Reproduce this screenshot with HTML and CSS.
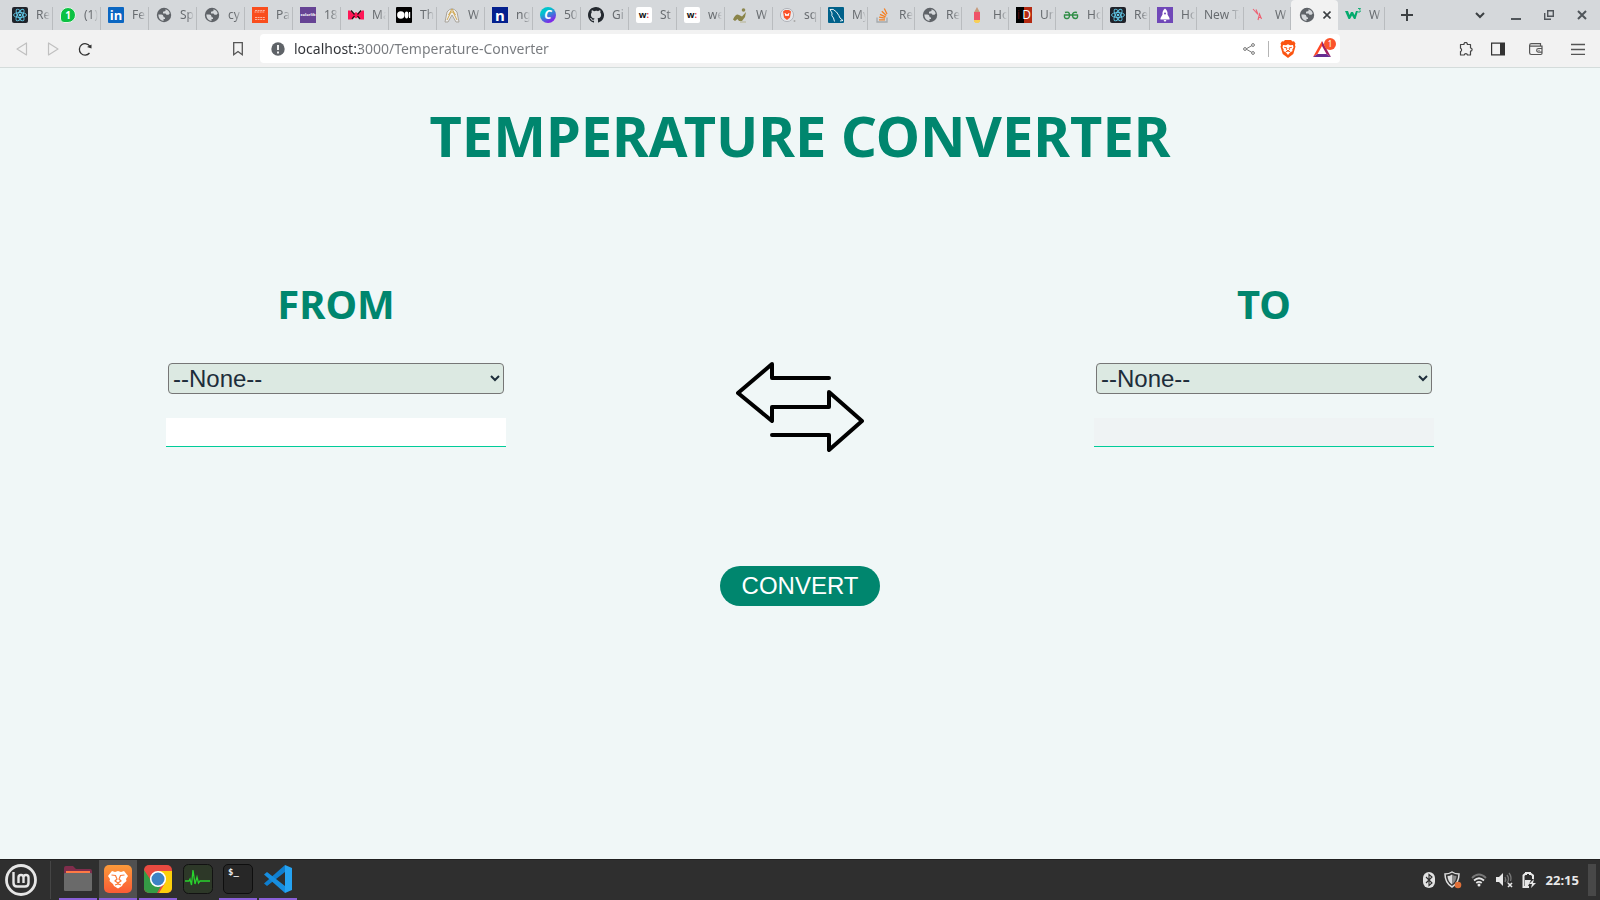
FILE: index.html
```html
<!DOCTYPE html>
<html lang="en">
<head>
<meta charset="utf-8">
<title>Temperature Converter</title>
<link rel="stylesheet" href="styles.css">
</head>
<body>
<svg class="defs" aria-hidden="true">
  <symbol id="globe" viewBox="0 0 16 16"><circle cx="8" cy="8" r="7.200" fill="#5f6368"/><path d="M2.300 7.500h3q2 0 2 1.500t1.700 1.500v1.500H7.500v2Q2.500 13 2.300 7.500zM9.500 2.200q3.500 1 4.200 4.300l-1.200 1.200h-2L9.500 6.500H7V4.800l2.500-.800z" fill="#d5d8db"/></symbol>
  <symbol id="react" viewBox="0 0 16 16"><rect width="16" height="16" rx="2" fill="#20232a"/><g fill="none" stroke="#61c9e8" stroke-width=".9"><ellipse cx="8" cy="8" rx="6.500" ry="2.500"/><ellipse cx="8" cy="8" rx="6.500" ry="2.500" transform="rotate(60 8 8)"/><ellipse cx="8" cy="8" rx="6.500" ry="2.500" transform="rotate(120 8 8)"/></g><circle cx="8" cy="8" r="1.300" fill="#61c9e8"/></symbol>
  <symbol id="lion" viewBox="0 0 16 18"><path d="M3.500 1.500 5 0h6l1.500 1.500L14 1.300l1.500 2.200-.6 1.500.6 1.500-2.200 7.500L8 18l-5.300-4L.5 6.500 1.100 5 .5 3.500 2 1.300z" fill="#fb5411"/><path d="m3 5 3 .2L8 4.200l2 1L13 5l.5 2.500-1.300 2.200.4 1.300-2.600 1.600L8 15l-2-2.400L3.400 11l.4-1.300L2.500 7.500z" fill="#fff"/><path d="M4.200 7.300 7 8l-.6 1.500L8 11l1.600-1.500L9 8l2.800-.7M5.800 11.700 8 11l2.200.7" fill="none" stroke="#fb5411" stroke-width="1"/></symbol>
</svg>

<header class="browser">
  <div class="tabstrip">
    <nav class="tabs" aria-label="Open tabs">
      <button class="tab"><svg class="fav"><use href="#react"/></svg><span class="tab-label">Re</span></button>
      <button class="tab"><span class="fav fav-whatsapp">1</span><span class="tab-label">(1)</span></button>
      <button class="tab"><span class="fav fav-linkedin">in</span><span class="tab-label">Fe</span></button>
      <button class="tab"><svg class="fav"><use href="#globe"/></svg><span class="tab-label">Sp</span></button>
      <button class="tab"><svg class="fav"><use href="#globe"/></svg><span class="tab-label">cy</span></button>
      <button class="tab"><svg class="fav" viewBox="0 0 16 16"><path fill="#f94d1c" d="M0 0h16v16H0z"/><path d="M3 3.500h10M2.500 5h10M3 10.500h10M3 12.500h10" stroke="#fbb39c" stroke-width="1" stroke-dasharray="2 .6"/></svg><span class="tab-label">Pa</span></button>
      <button class="tab"><span class="fav fav-colorlib">colorlib</span><span class="tab-label">18</span></button>
      <button class="tab"><svg class="fav" viewBox="0 0 16 16"><path d="M0 3.500h2L5.500 7 8 5l2.500 2L14 3.500h2v9h-3.500L10 10l-2 1.500L6 10l-2.500 2.500H0z" fill="#ff1656"/><path d="M3 3.500 6.500 7.500M13 3.500 9.500 7.500M4 12l2.500-3M12 12 9.500 9" stroke="#211" stroke-width="1.300"/></svg><span class="tab-label">Ma</span></button>
      <button class="tab"><svg class="fav" viewBox="0 0 16 16"><rect width="16" height="16" rx="1"/><circle cx="4.800" cy="8" r="3.700" fill="#fff"/><ellipse cx="10.600" cy="8" rx="1.900" ry="3.400" fill="#fff"/><path d="M13.600 5v6" stroke="#fff" stroke-width="1.200"/></svg><span class="tab-label">Th</span></button>
      <button class="tab"><svg class="fav" viewBox="0 0 16 16"><path d="M1 15h3l4-7 4 7h3L13 5Q8-1.500 3 5z" fill="#eee" stroke="#a9a49b"/><path d="m3 13 4-8h2l4 8M4.500 8 8 2l3.500 6" fill="none" stroke="#d0a64e"/></svg><span class="tab-label">W</span></button>
      <button class="tab"><span class="fav fav-nginx">n</span><span class="tab-label">ng</span></button>
      <button class="tab"><span class="fav fav-canva">C</span><span class="tab-label">50</span></button>
      <button class="tab"><svg class="fav" viewBox="0 0 16 16"><path fill="#24292f" d="M8 0C3.580 0 0 3.580 0 8c0 3.540 2.290 6.530 5.470 7.590.4.070.55-.17.55-.38v-1.490c-2.010.37-2.530-.49-2.690-.94-.09-.23-.48-.94-.82-1.130-.28-.15-.68-.52-.01-.53.63-.01 1.080.58 1.230.82.72 1.210 1.870.87 2.330.66.07-.52.28-.87.510-1.070-1.780-.2-3.640-.89-3.640-3.950 0-.87.31-1.590.82-2.150-.08-.2-.36-1.020.08-2.120 0 0 .67-.21 2.200.82A7.600 7.600 0 0 1 8 3.860c.68 0 1.360.09 2 .27 1.530-1.040 2.200-.82 2.200-.82.44 1.100.16 1.920.08 2.120.51.56.82 1.270.82 2.150 0 3.070-1.870 3.750-3.650 3.950.29.25.54.73.54 1.480v2.200c0 .21.15.46.55.38A8 8 0 0 0 8 0z"/></svg><span class="tab-label">Gi</span></button>
      <button class="tab"><span class="fav fav-w">w<i>:</i></span><span class="tab-label">St</span></button>
      <button class="tab"><span class="fav fav-w">w<i>:</i></span><span class="tab-label">we</span></button>
      <button class="tab"><svg class="fav" viewBox="0 0 16 16"><circle cx="11.500" cy="3" r="1.800" fill="#8d884f"/><path d="M1 12.500Q4 6 7 8l3 1.500L14 5l-1 5-3 4H7l-1.500-2L3 14z" fill="#8a8449"/><path d="M8 15h6" stroke="#b7b492"/></svg><span class="tab-label">W</span></button>
      <button class="tab"><svg class="fav" viewBox="0 0 16 16"><circle cx="7" cy="8" r="6.600" fill="#e6e8eb" stroke="#b2b5bb"/><circle cx="14.500" cy="14" r="1" fill="#aaa"/><path d="M3 4.500 5 3h4l2 1.500-1 6L7 13l-3-2.500z" fill="#fb542b"/><path d="m5 6 1 3 1-2 1 2 1-3" stroke="#fff" fill="none"/></svg><span class="tab-label">sq</span></button>
      <button class="tab narrow"><svg class="fav" viewBox="0 0 16 16"><rect width="16" height="16" rx="1" fill="#00618a"/><path d="M2 2.500Q5 1 8.500 5q3 4 3.500 6l3 2.500-3 .5M2 2.500 4 6q-1 3 1.500 5l1 3.500" stroke="#fff" stroke-width=".9" fill="none"/></svg><span class="tab-label">My</span></button>
      <button class="tab narrow"><svg class="fav" viewBox="0 0 16 16"><path d="M2 10.500v4.500h10v-4.500" fill="none" stroke="#a5a9ad" stroke-width="1.300"/><path d="M4 12.800h6M4.100 10.200l6 1M5 7.300l5.600 2.600M6.800 4.300l4.500 4.200M9.300 1.500l2.700 5.500" stroke="#f48024" stroke-width="1.300"/></svg><span class="tab-label">Re</span></button>
      <button class="tab narrow"><svg class="fav"><use href="#globe"/></svg><span class="tab-label">Re</span></button>
      <button class="tab narrow"><svg class="fav" viewBox="0 0 16 16"><path d="M5 5.500 8 0l3 5.500z" fill="#c79a7a"/><path d="M5 5h6v8H5z" fill="#ef5366"/><path d="M5 13h6v1.500L9.500 16h-3L5 14.500z" fill="#f8cf58"/></svg><span class="tab-label">Ho</span></button>
      <button class="tab narrow"><span class="fav fav-id"><i>i</i><b>D</b></span><span class="tab-label">Un</span></button>
      <button class="tab narrow"><svg class="fav" viewBox="0 0 16 16"><path d="M2 5.500Q6.500 4 6.500 8t-3 3.500Q1 11.500 1.500 8h13q.500 3.500-2 3.500-3 0-3-3.500T14 5.500" fill="none" stroke="#2f8d46" stroke-width="1.400"/></svg><span class="tab-label">Ho</span></button>
      <button class="tab narrow"><svg class="fav"><use href="#react"/></svg><span class="tab-label">Re</span></button>
      <button class="tab narrow"><svg class="fav" viewBox="0 0 16 16"><path fill="#7048b8" d="M0 0h16v16H0z"/><path d="M8 1.500q3 2.500 2.500 6L12.500 11v1.500H3.500V11l2-3.500Q5 4 8 1.500M6.500 13h3L8 15z" fill="#fff"/><circle cx="8" cy="6.500" r="1" fill="#7048b8"/></svg><span class="tab-label">Ho</span></button>
      <button class="tab narrow"><span class="tab-label wide">New Tab</span></button>
      <button class="tab narrow"><svg class="fav" viewBox="0 0 16 16"><path d="m2 2 5 5.500M5 2.500l2 5M7 13l1.500-6 2 5M7.500 10.500h2.500" fill="none" stroke="#ee5f71" stroke-width="1.100"/></svg><span class="tab-label">W</span></button>
      <button class="tab narrow active" aria-label="Temperature Converter"><svg class="fav"><use href="#globe"/></svg><svg class="tab-close" viewBox="0 0 8 8"><path d="m.5.5 7 7m0-7-7 7" stroke="#3c4043" stroke-width="1.600"/></svg></button>
      <button class="tab narrow"><svg class="fav" viewBox="0 0 16 16"><path d="M0 4h3l1.500 4L6 5h2l1.500 3L11 4h2l-2.500 8H9L7 8.500 5 12H3.500z" fill="#04aa6d"/><path d="M13 1.500h2.500l-1 1.500q1.500.500.500 2h-2" fill="none" stroke="#04aa6d" stroke-width=".9"/></svg><span class="tab-label">W</span></button>
    </nav>
    <button class="icon-btn new-tab" aria-label="New tab"><svg width="12" height="12" viewBox="0 0 12 12"><path d="M6 0v12M0 6h12" stroke="#3c4043" stroke-width="2"/></svg></button>
    <div class="window-controls">
      <button class="icon-btn" aria-label="Search tabs"><svg width="10" height="8" viewBox="0 0 10 8"><path d="m1 2 4 4 4-4" fill="none" stroke="#3c4043" stroke-width="2"/></svg></button>
      <button class="icon-btn" aria-label="Minimize"><svg width="10" height="10" viewBox="0 0 10 10"><path d="M0 9h10" stroke="#50555a" stroke-width="2"/></svg></button>
      <button class="icon-btn" aria-label="Restore"><svg width="10" height="10" viewBox="0 0 10 10"><path d="M3.700.700h5.600v5.600H3.700zM.700 3v6.300H7" fill="none" stroke="#50555a" stroke-width="1.400"/></svg></button>
      <button class="icon-btn" aria-label="Close"><svg width="10" height="10" viewBox="0 0 10 10"><path d="m1 1 8 8m0-8L1 9" stroke="#50555a" stroke-width="2"/></svg></button>
    </div>
  </div>

  <div class="toolbar">
    <div class="nav-buttons">
      <button class="icon-btn" aria-label="Back"><svg width="12" height="14" viewBox="0 0 12 14"><path d="M10.500 1v12L1 7z" fill="none" stroke="#c0c0c0" stroke-width="1.200" stroke-linejoin="round"/></svg></button>
      <button class="icon-btn" aria-label="Forward"><svg width="12" height="14" viewBox="0 0 12 14"><path d="M1.500 1v12L11 7z" fill="none" stroke="#c0c0c0" stroke-width="1.200" stroke-linejoin="round"/></svg></button>
      <button class="icon-btn" aria-label="Reload"><svg width="14" height="14" viewBox="0 0 14 14"><path d="M12 4.500A5.700 5.700 0 1 0 11.500 11" fill="none" stroke="#333" stroke-width="1.300"/><path d="m9 5 4.500-2.500v4z" fill="#333"/></svg></button>
    </div>
    <button class="icon-btn bookmark" aria-label="Bookmark this tab"><svg width="10" height="14" viewBox="0 0 10 14"><path d="M.700.700h8.600v12L5 9.500.700 12.700z" fill="none" stroke="#555" stroke-width="1.300"/></svg></button>
    <div class="address">
      <svg width="14" height="14" viewBox="0 0 14 14"><circle cx="7" cy="7" r="6.700" fill="#5f6368"/><path d="M7 3v5M7 9.500v2" stroke="#fff" stroke-width="1.800"/></svg>
      <input class="url" type="text" aria-label="Address" value="localhost:3000/Temperature-Converter">
      <button class="icon-btn" aria-label="Share"><svg width="12" height="12" viewBox="0 0 12 12"><path d="M3 6l6-3.500M3 6l6 3.500" stroke="#777"/><g fill="#fff" stroke="#777"><circle cx="2" cy="6" r="1.400"/><circle cx="10" cy="2" r="1.400"/><circle cx="10" cy="10" r="1.400"/></g></svg></button>
      <span class="address-rule"></span>
      <button class="icon-btn" aria-label="Brave Shields"><svg width="16" height="18"><use href="#lion"/></svg></button>
      <button class="icon-btn rewards" aria-label="Brave Rewards"><svg width="18" height="16" viewBox="0 0 18 16"><path d="M9 0 0 16l4.500-3L9 5z" fill="#ff4724"/><path d="m9 0 9 16-4.500-3L9 5z" fill="#9e1f63"/><path d="M0 16h18l-4.500-3h-9z" fill="#662d91"/></svg><span class="badge">1</span></button>
    </div>
    <div class="tools">
      <button class="icon-btn" aria-label="Extensions"><svg width="14" height="14" viewBox="0 0 14 14"><path d="M1.500 2.500H5a1.700 1.700 0 1 1 3.300 0H11.500V6a1.600 1.600 0 1 1 0 3.200v3.800H8.500a1.700 1.700 0 0 0-3.300 0H1.500V9.500a1.700 1.700 0 0 0 0-3.200z" fill="none" stroke="#444" stroke-width="1.200" stroke-linejoin="round"/></svg></button>
      <button class="icon-btn" aria-label="Sidebar"><svg width="14" height="14" viewBox="0 0 14 14"><path d="M.600 1.100h12.800v11.800H.600z" fill="none" stroke="#333" stroke-width="1.200"/><path d="M9 1h4.500v12H9z" fill="#333"/></svg></button>
      <button class="icon-btn" aria-label="Wallet"><svg width="14" height="14" viewBox="0 0 14 14"><path d="M11.500 4V1.700h-9Q.600 1.700.600 3.500v7.300q0 1.700 1.700 1.700h9.500q1.200 0 1.200-1.200V4.200H2Q.6 4.200.6 3M13 6.500H9.500a1.800 1.800 0 0 0 0 3.600H13M9.500 8.300h1" fill="none" stroke="#555" stroke-width="1.200"/></svg></button>
      <button class="icon-btn" aria-label="Menu"><svg width="14" height="12" viewBox="0 0 14 12"><path d="M0 1.500h14M0 6.500h14M0 11.300h14" stroke="#555" stroke-width="1.300"/></svg></button>
    </div>
  </div>
</header>

<main class="page">
  <h1 class="title">TEMPERATURE CONVERTER</h1>
  <form class="converter">
    <section class="side">
      <h2 class="side-title">FROM</h2>
      <select class="unit" aria-label="From unit"><option>--None--</option><option>Celsius</option><option>Fahrenheit</option><option>Kelvin</option></select>
      <input class="value" type="text" aria-label="From value">
    </section>
    <svg class="arrows" viewBox="0 0 128 90"><path d="M93 16H36V2L2 31l34 28V45h57V30l33 29-33 29V73H36" fill="none" stroke="#000" stroke-width="4" stroke-linecap="round" stroke-linejoin="round"/></svg>
    <section class="side">
      <h2 class="side-title">TO</h2>
      <select class="unit" aria-label="To unit"><option>--None--</option><option>Celsius</option><option>Fahrenheit</option><option>Kelvin</option></select>
      <input class="value" type="text" aria-label="To value" disabled>
    </section>
    <button class="convert" type="button">CONVERT</button>
  </form>
</main>

<footer class="taskbar">
  <button class="icon-btn start" aria-label="Start menu"><svg width="32" height="32" viewBox="0 0 32 32"><circle cx="16" cy="16" r="14.500" fill="none" stroke="#e6e6e6" stroke-width="2.800"/><path d="M8.500 8v11q0 3.500 3.500 3.500h8q3.500 0 3.500-3.500v-5.500q0-2.500-2.500-2.500t-2.500 2.500V19M18.500 13.500q0-2.500-2.500-2.500t-2.500 2.500V19" fill="none" stroke="#e6e6e6" stroke-width="2.400"/></svg></button>
  <span class="task-rule"></span>
  <div class="apps">
    <button class="app running" aria-label="Files"><svg width="28" height="28" viewBox="0 0 28 28"><path d="M0 10V3q0-2 2-2h7l3 3h14q2 0 2 2v4z" fill="#802d4c"/><path d="M2 6h24v6H2z" fill="#ff7a45"/><rect y="8" width="28" height="18" rx="1" fill="#6a6a6a"/></svg></button>
    <button class="app running focused" aria-label="Brave"><svg width="28" height="28" viewBox="0 0 28 28"><defs><linearGradient id="bg" x2="0" y2="1"><stop stop-color="#fb9a3a"/><stop offset="1" stop-color="#fb5b35"/></linearGradient></defs><rect width="28" height="28" rx="5" fill="url(#bg)"/><path d="m8 6 3 1 3-1 3 1 3-1 4 5-2 3 .5 2-3.500 3-1 2-4 2.500L10 21l-1-2-3.500-3 .5-2-2-3z" fill="#fff"/><path d="m7.500 10 4 .500L13 14l-2 2 3 2 3-2-2-2 1.500-3.500 4-.500M11 20l3-1 3 1" fill="none" stroke="#fb7a38" stroke-width="1.200"/></svg></button>
    <button class="app running" aria-label="Chrome"><svg width="28" height="28" viewBox="0 0 28 28"><defs><clipPath id="cr"><rect width="28" height="28" rx="5"/></clipPath></defs><g clip-path="url(#cr)"><path d="M0 0h28v28H0z" fill="#e84a40"/><path d="M0 5l8 12 9 4-4 7H0z" fill="#359b45"/><path d="M14 6h14v22H15l6-10z" fill="#fccf0b"/></g><circle cx="14" cy="14" r="7.300" fill="#3d82c4" stroke="#fff" stroke-width="1.600"/></svg></button>
    <button class="app" aria-label="System Monitor"><svg width="30" height="30" viewBox="0 0 30 30"><rect x=".5" y=".5" width="29" height="29" rx="5" fill="#2d3828" stroke="#121212"/><path d="M2 17h4l1-2 1.500 6L10 6l2 14 2-7 1.500 6 1.500-2h10" fill="none" stroke="#28d42d" stroke-width="1.300"/></svg></button>
    <button class="app running" aria-label="Terminal"><span class="terminal">$_</span></button>
    <button class="app running" aria-label="Visual Studio Code"><svg width="28" height="28" viewBox="0 0 28 28"><path d="M21 0 28 3v22l-7 3z" fill="#25a3f2"/><path d="M21 0v7L3 21l-3-2.500z" fill="#0f7fd0"/><path d="M21 28v-7L3 7 0 9.500z" fill="#178ee0"/></svg></button>
  </div>
  <div class="tray">
    <svg width="12" height="16" viewBox="0 0 12 16"><rect width="12" height="16" rx="6" fill="#e2e2e2"/><path d="m3 5 6 6-3 2.500v-11L9 5l-6 6" fill="none" stroke="#2f2f2f" stroke-width="1.100"/></svg>
    <svg width="18" height="18" viewBox="0 0 18 18"><path d="M8 1q3 2 7 2 0 9-7 13Q1 12 1 3q4 0 7-2z" fill="#333" stroke="#ddd" stroke-width="1.500"/><path d="M8 3.500v10Q3.500 10 3.500 5 6 5 8 3.500z" fill="#ddd"/><path d="M8 3.500v10q4.500-3.500 4.500-8.500Q10 5 8 3.500z" fill="#888"/><circle cx="14" cy="14" r="3.300" fill="#e07038"/></svg>
    <svg width="16" height="14" viewBox="0 0 16 14"><path d="M1 5Q8-2 15 5" fill="none" stroke="#777" stroke-width="1.800"/><path d="M3 7.500q5-4.500 10 0M5.300 10q2.700-2.300 5.400 0" fill="none" stroke="#e8e8e8" stroke-width="1.800"/><circle cx="8" cy="12" r="1.500" fill="#e8e8e8"/></svg>
    <svg width="17" height="16" viewBox="0 0 17 16"><path d="M0 5h3l4-4v13l-4-4H0z" fill="#e8e8e8"/><path d="M9 5q1.500 2.500 0 5M11 3q3 4 0 8M13 1q3 4 1.500 8" fill="none" stroke="#777" stroke-width="1.300"/><path d="m12 11 4 4m0-4-4 4" stroke="#e8e8e8" stroke-width="1.600"/></svg>
    <svg width="15" height="16" viewBox="0 0 15 16"><path d="M7 15H1.500V3.500L3 2h1V1h4v1h1l2 1.500V7" fill="none" stroke="#e8e8e8" stroke-width="2"/><path d="M3 8h6l-3 6H3zM12 7l-5 5h3l-1 4 5-5h-3z" fill="#e8e8e8"/></svg>
    <time class="clock">22:15</time>
    <button class="show-desktop" aria-label="Show desktop"></button>
  </div>
</footer>
</body>
</html>
```

FILE: styles.css
```css
* { box-sizing: border-box; }

body {
  margin: 0;
  min-height: 100vh;
  display: flex;
  flex-direction: column;
  background: #f0f7f7;
  font-family: "Noto Sans", "Open Sans", sans-serif;
}

button {
  margin: 0;
  padding: 0;
  border: 0;
  background: none;
  font: inherit;
  color: inherit;
}

svg { display: block; flex: none; }

.defs { position: absolute; width: 0; height: 0; }

.icon-btn {
  display: flex;
  align-items: center;
  justify-content: center;
}

/* Tab strip */
.tabstrip {
  display: flex;
  align-items: stretch;
  height: 30px;
  padding-left: 5px;
  background: #d5d8db;
}

.tabs { display: flex; }

.tab {
  display: flex;
  align-items: center;
  gap: 8px;
  width: 48px;
  padding-left: 7px;
  background: linear-gradient(#b9bcbf, #b9bcbf) right bottom / 1px 23px no-repeat;
  overflow: hidden;
}

.tab.narrow { width: 47px; }

.tab.active {
  gap: 8px;
  padding-left: 8px;
  background: #f2f2f2;
  border-radius: 4px 4px 0 0;
}

.tab-close { width: 8px; height: 8px; }

.tab-label {
  width: 14px;
  overflow: hidden;
  white-space: nowrap;
  text-align: left;
  font-size: 12px;
  line-height: 18px;
  color: #686c70;
  mask-image: linear-gradient(90deg, #000 50%, transparent);
}

.tab-label.wide {
  width: 36px;
  mask-image: linear-gradient(90deg, #000 65%, transparent);
}

.fav {
  flex: none;
  display: flex;
  align-items: center;
  justify-content: center;
  width: 16px;
  height: 16px;
  font: bold 12px/16px "Open Sans", sans-serif;
  color: #fff;
}

.fav i { font-style: normal; }
.fav-whatsapp { border-radius: 8px 8px 8px 4px; background: #0cc143; border: 1px solid #e8f5ea; font-size: 10px; }
.fav-linkedin { border-radius: 1px; background: #0a66c2; font-size: 13px; }
.fav-colorlib { background: #664394; font-size: 4px; }
.fav-nginx { background: #04208e; font-size: 15px; }
.fav-canva { border-radius: 50%; background: linear-gradient(150deg, #00c4cc 30%, #7d2ae8 80%); font-style: italic; }
.fav-w { border-radius: 2px; background: #fff; color: #111; font-size: 9px; }
.fav-w i { color: #e33; }
.fav-id { background: linear-gradient(90deg, #000 50%, #b52a12 50%); font: 12px/16px "Open Sans", sans-serif; justify-content: space-around; }
.fav-id i { color: #601010; }
.fav-id b { font-weight: normal; }

.new-tab { width: 44px; }

.window-controls {
  display: flex;
  align-items: center;
  gap: 23px;
  margin-left: auto;
  padding-right: 13px;
}

.window-controls .icon-btn:first-child { margin-right: 3px; }

/* Toolbar */
.toolbar {
  display: flex;
  align-items: center;
  height: 38px;
  padding: 0 15px 0 16px;
  background: #f2f2f2;
  border-bottom: 1px solid #d4dcdb;
}

.nav-buttons { display: flex; gap: 19px; }

.bookmark { margin: 0 17px 0 141px; }

.address {
  flex: 1;
  display: flex;
  align-items: center;
  height: 29px;
  margin-right: 119px;
  padding: 0 4px 0 11px;
  background: #fff;
  border-radius: 4px;
}

.url {
  flex: 1;
  min-width: 0;
  margin-left: 9px;
  padding: 0;
  border: 0;
  outline: 0;
  font: 14px/20px "Noto Sans", sans-serif;
  color: transparent;
  background: linear-gradient(90deg, #303236 66px, #777a7e 66px);
  background-clip: text;
}

.address-rule {
  width: 1px;
  height: 16px;
  margin: 0 11px 0 13px;
  background: #b5b5b5;
}

.rewards { position: relative; margin-left: 17px; padding-right: 5px; }

.badge {
  position: absolute;
  top: -3px;
  right: 0;
  width: 12px;
  height: 12px;
  border-radius: 6px;
  background: #fb542b;
  color: #fff;
  font-size: 8px;
  line-height: 12px;
}

.tools { display: flex; gap: 18px; }
.tools .icon-btn:nth-child(n+3) { margin-left: 6px; }
.tools .icon-btn:last-child { margin-left: 10px; }

/* Converter page */
.page { flex: 1; }

.title {
  margin: 30px 0 0;
  text-align: center;
  font-size: 56px;
  line-height: 74px;
  color: #00866e;
}

.converter {
  display: grid;
  grid-template-columns: repeat(3, 1fr);
  justify-items: center;
  align-items: start;
  padding: 105px 6.5% 0;
}

.side {
  display: flex;
  flex-direction: column;
  align-items: center;
}

.side-title {
  margin: 0;
  font-size: 40px;
  line-height: 54px;
  color: #00866e;
}

.unit {
  width: 336px;
  height: 31px;
  margin-top: 32px;
  border: 1px solid #767676;
  border-radius: 4px;
  background-color: #dce9e2;
  color: #1d2d3a;
  font: 24px/28px "Liberation Sans", Arial, sans-serif;
}

.value {
  width: 340px;
  height: 29px;
  margin-top: 24px;
  border: 0;
  border-bottom: 1px solid #00cc99;
  background: #fff;
  font: 24px/28px "Liberation Sans", Arial, sans-serif;
}

.value:disabled { background: #eff3f4; }

.arrows { width: 128px; height: 90px; margin-top: 85px; }

.convert {
  grid-column: 2;
  width: 160px;
  height: 40px;
  margin-top: 114px;
  border-radius: 20px;
  background: #00866e;
  color: #fff;
  font: 24px/28px "Liberation Sans", Arial, sans-serif;
}

/* Desktop panel */
.taskbar {
  display: flex;
  align-items: center;
  height: 41px;
  padding: 0 4px 0 5px;
  background: #2f2f2f;
  border-top: 1px solid #202020;
}

.task-rule { width: 1px; height: 38px; margin: 0 8px 0 13px; background: #454545; }

.apps { display: flex; align-self: stretch; gap: 2px; }

.app {
  display: flex;
  align-items: center;
  justify-content: center;
  width: 38px;
  border-bottom: 2px solid transparent;
}

.app.running { border-bottom-color: #8a5fd8; }
.app.focused { background: #505050; }

.terminal {
  width: 30px;
  height: 30px;
  padding: 1px 4px;
  border: 1px solid #0e0e0e;
  border-radius: 5px;
  background: #272727;
  color: #eee;
  font: bold 9px/12px "DejaVu Sans Mono", monospace;
  text-align: left;
}

.tray {
  display: flex;
  align-items: center;
  gap: 9px;
  margin-left: auto;
  color: #e8e8e8;
}

.clock { font-size: 13px; font-weight: bold; line-height: 16px; }

.show-desktop { width: 8px; height: 32px; background: #484848; }
```
